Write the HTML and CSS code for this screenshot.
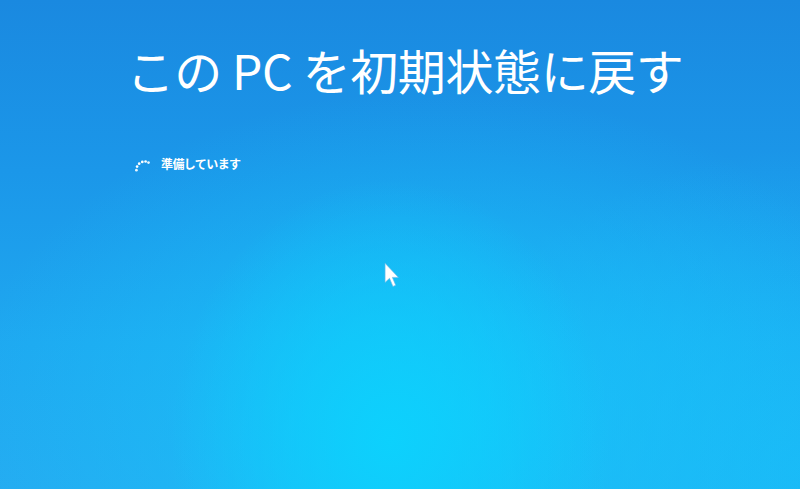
FILE: index.html
```html
<!DOCTYPE html>
<html lang="ja">
<head>
<meta charset="utf-8">
<title>この PC を初期状態に戻す</title>
<link rel="stylesheet" href="styles.css">
</head>
<body>
<main class="screen">
  <h1 class="title">この PC を初期状態に戻す</h1>
  <div class="status">
    <svg class="spinner" width="20" height="20" viewBox="0 0 20 20" aria-hidden="true">
      <circle cx="3.4" cy="16.2" r="1.35" fill="#fff" opacity="0.9"/>
      <circle cx="4.1" cy="12.6" r="1.35" fill="#fff"/>
      <circle cx="6.2" cy="9.7" r="1.35" fill="#fff"/>
      <circle cx="9.3" cy="7.9" r="1.35" fill="#fff"/>
      <circle cx="12.6" cy="7.5" r="1.35" fill="#fff"/>
      <circle cx="15.5" cy="8.6" r="1.35" fill="#fff" opacity="0.9"/>
    </svg>
    <span class="status-text">準備しています</span>
  </div>
  <svg class="cursor" width="17" height="28" viewBox="0 0 16 26" aria-hidden="true">
    <path d="M1 1 L1 19 L5.2 15.2 L8.4 22.8 L11 21.7 L7.9 14.3 L13.6 14.3 Z" fill="#fff" stroke="#6ab8e8" stroke-width="0.6" stroke-linejoin="round"/>
  </svg>
</main>
</body>
</html>
```
FILE: styles.css
```css
html, body {
  margin: 0;
  padding: 0;
  width: 800px;
  height: 489px;
  overflow: hidden;
}

.screen {
  position: relative;
  width: 800px;
  height: 489px;
  box-sizing: border-box;
  padding-top: 39px;
  color: #fff;
  font-family: "Noto Sans CJK JP", "Noto Sans", sans-serif;
  background:
    radial-gradient(ellipse 220px 260px at 390px 440px, rgba(12, 210, 253, 0.95) 0%, rgba(12, 210, 253, 0.5) 50%, rgba(12, 210, 253, 0) 100%),
    radial-gradient(ellipse 480px 330px at 440px 420px, rgba(22, 198, 250, 0.85) 0%, rgba(22, 198, 250, 0) 100%),
    radial-gradient(ellipse 380px 320px at 800px 470px, rgba(24, 188, 248, 0.8) 0%, rgba(24, 188, 248, 0) 100%),
    linear-gradient(180deg, #1a89e0 0%, #1b97e9 35%, #1fa8f0 70%, #25abf1 100%);
}

.title {
  margin: 0;
  text-align: center;
  font-size: 48px;
  line-height: 60px;
  font-weight: 400;
  letter-spacing: -0.4px;
  padding-left: 10px;
}

.status {
  display: flex;
  align-items: center;
  gap: 8px;
  margin-top: 55px;
  padding-left: 133px;
}

.spinner {
  display: block;
  flex: none;
}

.status-text {
  font-size: 12px;
  line-height: 20px;
  font-weight: 700;
  letter-spacing: -0.6px;
}

.cursor {
  position: absolute;
  left: 384px;
  top: 262px;
}
```
